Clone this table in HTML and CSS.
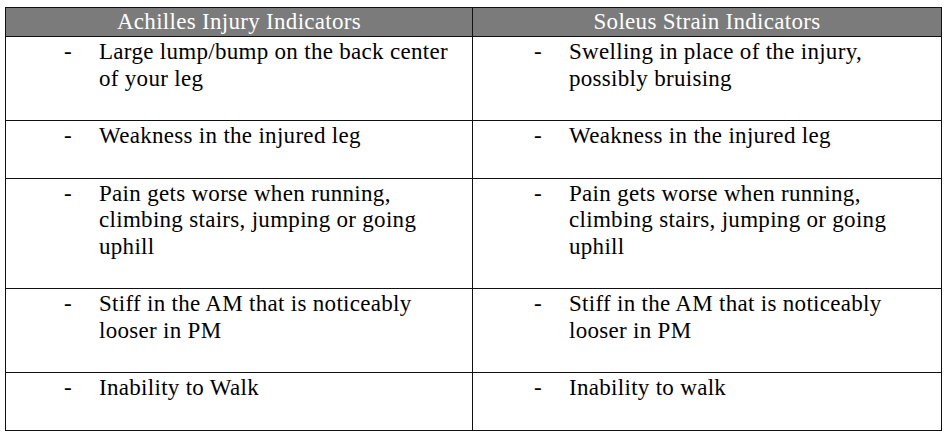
FILE: index.html
```html
<!DOCTYPE html>
<html lang="en">
<head>
<meta charset="utf-8">
<title>Injury Indicators</title>
<link rel="stylesheet" href="styles.css">
</head>
<body>
<div class="page">
  <table class="indicators">
    <colgroup>
      <col class="col-left">
      <col class="col-right">
    </colgroup>
    <thead>
      <tr>
        <th>Achilles Injury Indicators</th>
        <th>Soleus Strain Indicators</th>
      </tr>
    </thead>
    <tbody>
      <tr>
        <td><div class="item"><span class="dash">-</span><span class="text">Large lump/bump on the back center of your leg</span></div></td>
        <td><div class="item"><span class="dash">-</span><span class="text">Swelling in place of the injury, possibly bruising</span></div></td>
      </tr>
      <tr>
        <td><div class="item"><span class="dash">-</span><span class="text">Weakness in the injured leg</span></div></td>
        <td><div class="item"><span class="dash">-</span><span class="text">Weakness in the injured leg</span></div></td>
      </tr>
      <tr>
        <td><div class="item"><span class="dash">-</span><span class="text">Pain gets worse when running, climbing stairs, jumping or going uphill</span></div></td>
        <td><div class="item"><span class="dash">-</span><span class="text">Pain gets worse when running, climbing stairs, jumping or going uphill</span></div></td>
      </tr>
      <tr>
        <td><div class="item"><span class="dash">-</span><span class="text">Stiff in the AM that is noticeably looser in PM</span></div></td>
        <td><div class="item"><span class="dash">-</span><span class="text">Stiff in the AM that is noticeably looser in PM</span></div></td>
      </tr>
      <tr>
        <td><div class="item"><span class="dash">-</span><span class="text">Inability to Walk</span></div></td>
        <td><div class="item"><span class="dash">-</span><span class="text">Inability to walk</span></div></td>
      </tr>
    </tbody>
  </table>
</div>
</body>
</html>
```

FILE: styles.css
```css
html, body {
  margin: 0;
  padding: 0;
  background: #ffffff;
}

.page {
  padding: 7px 0 0 5px;
  font-family: "Liberation Serif", "Times New Roman", Times, serif;
  font-size: 23px;
  letter-spacing: 0.3px;
  color: #000000;
}

.indicators {
  border-collapse: collapse;
  table-layout: fixed;
  width: 936px;
}

.col-left {
  width: 467px;
}

.col-right {
  width: 469px;
}

.indicators th,
.indicators td {
  border: 1px solid #111111;
}

.indicators th {
  background: #7b7b7b;
  color: #ffffff;
  font-weight: normal;
  text-align: center;
  padding: 1px 0 1px;
  line-height: 26px;
  vertical-align: middle;
}

.indicators td {
  vertical-align: top;
  padding: 2px 6px 28px 58px;
  line-height: 26.5px;
}

.indicators td + td {
  padding-left: 61px;
}

.item {
  display: flex;
  align-items: flex-start;
}

.dash {
  flex: 0 0 35px;
}

.text {
  flex: 1 1 auto;
}
```
